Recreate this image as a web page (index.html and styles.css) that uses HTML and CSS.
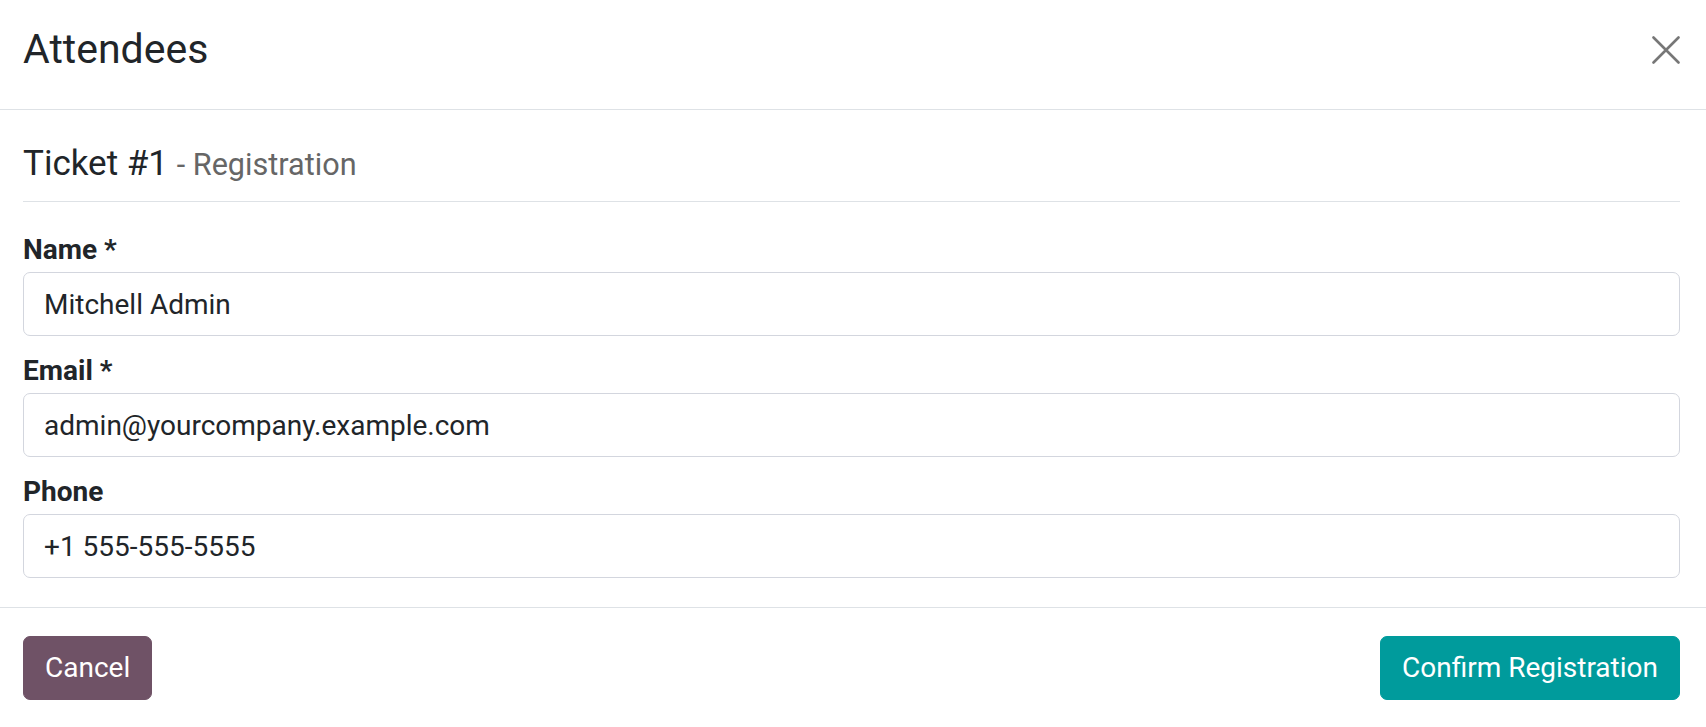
FILE: index.html
```html
<!doctype html>
<html lang="en">
<head>
<meta charset="UTF-8">
<title>Attendees</title>
<meta name="viewport" content="width=device-width,initial-scale=1">
<link rel="stylesheet" href="styles.css">
</head>
<body>

<div class="modal_header">
  <h3 class="modal_title">Attendees</h3>
  <button class="close_btn" type="button" aria-label="Close">
    <svg width="28" height="28" viewBox="0 0 28 28" xmlns="http://www.w3.org/2000/svg">
      <path d="M1.5 1.5 L26.5 26.5 M26.5 1.5 L1.5 26.5" stroke="#777" stroke-width="2.6" stroke-linecap="round" fill="none"/>
    </svg>
  </button>
</div>

<div class="modal_body">
  <h4 class="ticket_title">Ticket #1 <small class="ticket_sub">- Registration</small></h4>

  <form class="attendee_form" onsubmit="return false">
    <div class="field">
      <label for="att_name">Name *</label>
      <input type="text" id="att_name" value="Mitchell Admin">
    </div>
    <div class="field">
      <label for="att_email">Email *</label>
      <input type="text" id="att_email" value="admin@yourcompany.example.com">
    </div>
    <div class="field">
      <label for="att_phone">Phone</label>
      <input type="text" id="att_phone" value="+1 555-555-5555">
    </div>
  </form>
</div>

<div class="modal_footer">
  <button class="btn btn_secondary" type="button">Cancel</button>
  <button class="btn btn_primary" type="button">Confirm Registration</button>
</div>

</body>
</html>
```

FILE: styles.css
```css
body {
    margin: 0;
    background: #fff;
    color: #212529;
    font-family: Roboto, "Noto Sans", sans-serif;
    font-size: 28px;
    line-height: 42px;
}

/* header */
.modal_header {
    box-sizing: border-box;
    height: 110px;
    display: flex;
    justify-content: space-between;
    align-items: flex-start;
    padding: 24px 26px 0 23px;
    border-bottom: 1px solid #dee2e6;
}
.modal_title {
    margin: 0;
    font-size: 41px;
    font-weight: 400;
    line-height: 50px;
}
.close_btn {
    margin-top: 12px;
    padding: 0;
    border: 0;
    background: none;
    width: 28px;
    height: 28px;
    display: block;
}
.close_btn svg {
    display: block;
}

/* body */
.modal_body {
    padding: 33px 26px 29px 23px;
}
.ticket_title {
    margin: 0 0 27px 0;
    padding-bottom: 15px;
    border-bottom: 1px solid #dee2e6;
    font-size: 35px;
    font-weight: 400;
    line-height: 42px;
}
.ticket_sub {
    font-size: 0.875em;
    color: #666;
}
.field {
    margin-bottom: 14px;
}
.field:last-child {
    margin-bottom: 0;
}
.field label {
    display: block;
    font-weight: 700;
    margin-bottom: 1px;
}
.field input {
    box-sizing: border-box;
    display: block;
    width: 100%;
    height: 64px;
    padding: 10px 20px;
    border: 1px solid #d3d6de;
    border-radius: 7px;
    font-family: inherit;
    font-size: 28px;
    line-height: 42px;
    color: #212529;
    outline: none;
}

/* footer */
.modal_footer {
    display: flex;
    justify-content: space-between;
    padding: 28px 26px 27px 23px;
    border-top: 1px solid #dee2e6;
}
.btn {
    box-sizing: border-box;
    height: 64px;
    padding: 10px 21px;
    border: 1px solid transparent;
    border-radius: 7px;
    font-family: inherit;
    font-size: 28px;
    line-height: 42px;
    color: #fff;
}
.btn_secondary {
    background: #6f5266;
    border-color: #6f5266;
}
.btn_primary {
    background: #009b9c;
    border-color: #009b9c;
}
```
